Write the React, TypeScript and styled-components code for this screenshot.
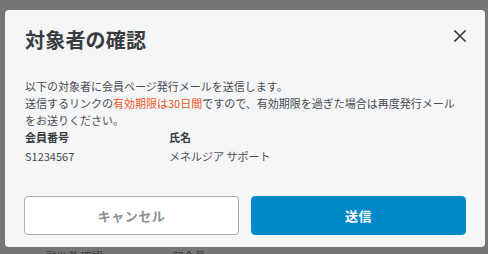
import React from "react";
import styled, { createGlobalStyle } from "styled-components";

const Global = createGlobalStyle`
  html, body { margin: 0; padding: 0; }
  body {
    font-family: "Noto Sans CJK JP", "Noto Sans", sans-serif;
    background: #767676;
  }
`;

const Page = styled.div`
  width: 488px;
  height: 254px;
  overflow: hidden;
  background: #767676;
  display: flex;
  flex-direction: column;
  padding: 10px 3px 0 5px;
  box-sizing: border-box;
`;

const Dialog = styled.div`
  width: 480px;
  height: 237px;
  flex-shrink: 0;
  box-sizing: border-box;
  background: #f4f6f8;
  border-radius: 4px;
  padding: 14px 19px 12px 19px;
  display: flex;
  flex-direction: column;
`;

const Header = styled.div`
  display: flex;
  align-items: center;
  justify-content: space-between;
  height: 30px;
  padding-left: 1px;
`;

const Title = styled.h1`
  margin: 0;
  font-size: 20px;
  font-weight: 700;
  color: #3a3d40;
  letter-spacing: 0.2px;
`;

const Close = styled.button`
  border: none;
  background: none;
  padding: 0;
  width: 14px;
  height: 14px;
  margin: 0 -1px 6px 0;
  display: flex;
  align-items: center;
  justify-content: center;
  cursor: pointer;
`;

const Body = styled.div`
  margin-top: 24px;
  padding-left: 1px;
  font-size: 11px;
  line-height: 17px;
  color: #4a4d50;
`;

const Para = styled.p`
  margin: 0;
`;

const Hl = styled.span`
  color: #f0562a;
`;

const Table = styled.div`
  display: grid;
  grid-template-columns: 144px 1fr;
  row-gap: 2px;
  font-size: 11px;
  line-height: 17px;
`;

const Th = styled.div`
  font-weight: 700;
  color: #3a3d40;
`;

const Td = styled.div`
  color: #4a4d50;
`;

const Actions = styled.div`
  margin-top: auto;
  display: grid;
  grid-template-columns: 1fr 1fr;
  column-gap: 12px;
`;

const Btn = styled.button<{ $primary?: boolean }>`
  height: 39px;
  border-radius: 4px;
  font-family: inherit;
  font-size: 13px;
  font-weight: 700;
  cursor: pointer;
  border: 1px solid ${(p) => (p.$primary ? "#0088c8" : "#a9adb0")};
  background: ${(p) => (p.$primary ? "#0088c8" : "#ffffff")};
  color: ${(p) => (p.$primary ? "#ffffff" : "#8c9094")};
  letter-spacing: 0.5px;
`;

const Peek = styled.div`
  display: flex;
  height: 10px;
  font-size: 11px;
  line-height: 17px;
  color: #3e3e3e;
  padding-left: 40px;
  gap: 70px;
  margin-top: 1px;
`;

export default function App() {
  return (
    <>
      <Global />
      <Page>
        <Dialog>
          <Header>
            <Title>対象者の確認</Title>
            <Close aria-label="閉じる">
              <svg width="12" height="12" viewBox="0 0 12 12">
                <path d="M1 1L11 11M11 1L1 11" stroke="#3a3d40" strokeWidth="1.6" strokeLinecap="square" />
              </svg>
            </Close>
          </Header>
          <Body>
            <Para>以下の対象者に会員ページ発行メールを送信します。</Para>
            <Para>
              送信するリンクの<Hl>有効期限は30日間</Hl>ですので、有効期限を過ぎた場合は再度発行メール
            </Para>
            <Para>をお送りください。</Para>
            <Table>
              <Th>会員番号</Th>
              <Th>氏名</Th>
              <Td>S1234567</Td>
              <Td>メネルジア サポート</Td>
            </Table>
          </Body>
          <Actions>
            <Btn>キャンセル</Btn>
            <Btn $primary>送信</Btn>
          </Actions>
        </Dialog>
        <Peek>
          <span>副当者 確認</span>
          <span>部会員</span>
        </Peek>
      </Page>
    </>
  );
}
